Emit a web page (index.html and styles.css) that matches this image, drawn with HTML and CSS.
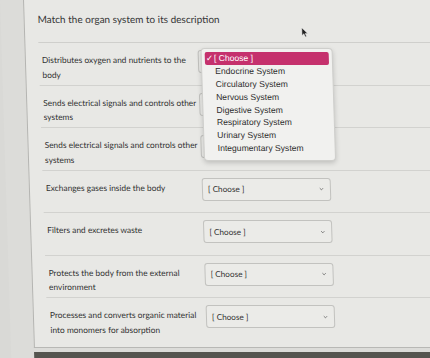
FILE: index.html
```html
<!DOCTYPE html>
<html lang="en">
<head>
<meta charset="utf-8">
<title>Match the organ system</title>
<link rel="stylesheet" href="styles.css">
</head>
<body>
<div class="screen">
  <main class="card">
    <h1 class="title">Match the organ system to its description</h1>
    <div class="rows">
      <div class="row">
        <p class="desc">Distributes oxygen and nutrients to the body</p>
        <div class="select"><span>[ Choose ]</span><svg class="chev" viewBox="0 0 6 4"><path d="M1 1 L3 3 L5 1"/></svg></div>
      </div>
      <div class="row">
        <p class="desc">Sends electrical signals and controls other systems</p>
        <div class="select"><span>[ Choose ]</span><svg class="chev" viewBox="0 0 6 4"><path d="M1 1 L3 3 L5 1"/></svg></div>
      </div>
      <div class="row">
        <p class="desc">Sends electrical signals and controls other systems</p>
        <div class="select"><span>[ Choose ]</span><svg class="chev" viewBox="0 0 6 4"><path d="M1 1 L3 3 L5 1"/></svg></div>
      </div>
      <div class="row">
        <p class="desc">Exchanges gases inside the body</p>
        <div class="select"><span>[ Choose ]</span><svg class="chev" viewBox="0 0 6 4"><path d="M1 1 L3 3 L5 1"/></svg></div>
      </div>
      <div class="row">
        <p class="desc">Filters and excretes waste</p>
        <div class="select"><span>[ Choose ]</span><svg class="chev" viewBox="0 0 6 4"><path d="M1 1 L3 3 L5 1"/></svg></div>
      </div>
      <div class="row">
        <p class="desc">Protects the body from the external environment</p>
        <div class="select"><span>[ Choose ]</span><svg class="chev" viewBox="0 0 6 4"><path d="M1 1 L3 3 L5 1"/></svg></div>
      </div>
      <div class="row">
        <p class="desc">Processes and converts organic material into monomers for absorption</p>
        <div class="select"><span>[ Choose ]</span><svg class="chev" viewBox="0 0 6 4"><path d="M1 1 L3 3 L5 1"/></svg></div>
      </div>
    </div>
    <ul class="menu">
      <li class="opt active"><span class="check">✓</span>[ Choose ]</li>
      <li class="opt">Endocrine System</li>
      <li class="opt">Circulatory System</li>
      <li class="opt">Nervous System</li>
      <li class="opt">Digestive System</li>
      <li class="opt">Respiratory System</li>
      <li class="opt">Urinary System</li>
      <li class="opt">Integumentary System</li>
    </ul>
    <svg class="cursor" viewBox="0 0 8 12"><path d="M1 0.5 L1 9.5 L3.2 7.5 L4.8 11 L6.2 10.4 L4.7 7 L7.5 7 Z"/></svg>
  </main>
  <div class="band"></div>
</div>
</body>
</html>
```
FILE: styles.css
```css
* { box-sizing: border-box; }
html, body { margin: 0; padding: 0; }
body {
  background: #d9d9d6;
  width: 430px;
  height: 358px;
  overflow: hidden;
  font-family: Lato, "Liberation Sans", sans-serif;
  color: #353535;
}
.screen {
  height: 358px;
  padding-left: 23px;
  display: flex;
  flex-direction: column;
  transform: skewX(1.8deg);
  transform-origin: 0 0;
  background: #dcdcd9;
}
.card {
  position: relative;
  flex: 1;
  background: #e8e8e5;
  border-left: 1px solid #b4b4b1;
  border-bottom: 1px solid #b8b8b5;
  padding-left: 13px;
  margin-bottom: 4px;
}
.title {
  margin: 0;
  height: 43px;
  padding-top: 12px;
  font-size: 10px;
  font-weight: 400;
  line-height: 14px;
  color: #353535;
  border-bottom: 1px solid #cfcfcc;
}
.rows { display: flex; flex-direction: column; }
.row {
  display: flex;
  align-items: flex-start;
  height: 42.5px;
  border-bottom: 1px solid #d2d2cf;
  padding-top: 7px;
}
.row:last-child { border-bottom: none; }
.desc {
  margin: 3px 0 0 0;
  padding-left: 3px;
  width: 159px;
  font-size: 8.4px;
  line-height: 14.5px;
  color: #333;
}
.select {
  width: 129px;
  height: 23px;
  display: flex;
  align-items: center;
  justify-content: space-between;
  padding: 0 6px 0 5px;
  background: #ebebe8;
  border: 1px solid #c2c2bf;
  border-radius: 3px;
  font-size: 8.2px;
  color: #333;
}
.chev { width: 5px; height: 4px; }
.chev path { fill: none; stroke: #6a6a6a; stroke-width: 1; }
.menu {
  position: absolute;
  left: 175px;
  top: 48px;
  width: 132px;
  margin: 0;
  padding: 3px 3px 5px;
  list-style: none;
  background: #f1f1ef;
  border: 1px solid #cfcfcc;
  border-radius: 4px;
  box-shadow: 0 2px 5px rgba(0,0,0,0.18);
  font-family: "Liberation Sans", Arial, sans-serif;
  font-size: 8.6px;
  color: #2e2e2e;
}
.opt {
  height: 12.9px;
  line-height: 12.9px;
  padding-left: 10px;
  border-radius: 2px;
}
.opt.active {
  background: #c5316d;
  color: #fff;
  padding-left: 1px;
}
.check { display: inline-block; width: 7px; margin-right: 1px; }
.cursor {
  position: absolute;
  left: 276px;
  top: 27px;
  width: 7px;
  height: 11px;
}
.cursor path { fill: #222; stroke: #eee; stroke-width: 0.6; }
.band {
  height: 6px;
  background: #55554f;
}
```
